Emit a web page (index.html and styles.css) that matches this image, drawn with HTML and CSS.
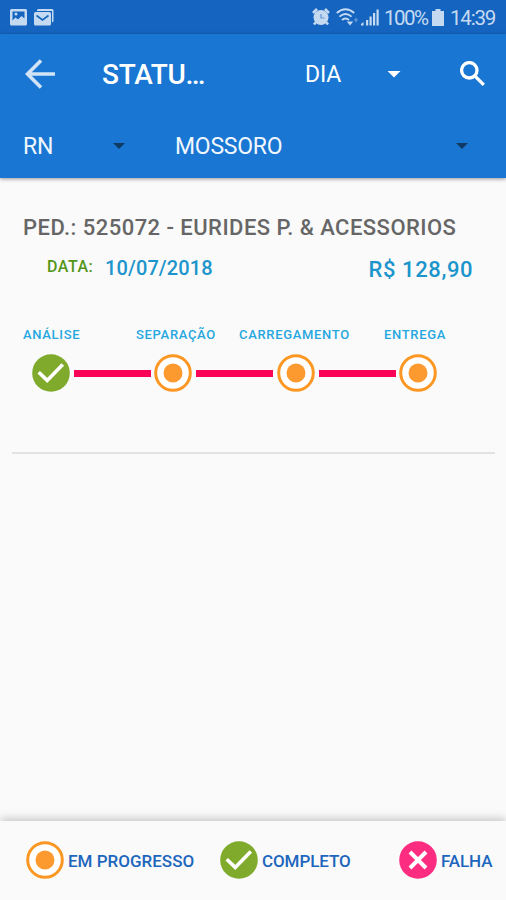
FILE: index.html
```
<!DOCTYPE html>
<html lang="pt-BR">
<head>
<meta charset="utf-8">
<title>Status</title>
<link rel="stylesheet" href="styles.css">
</head>
<body>
<svg class="defs" aria-hidden="true">
  <symbol id="progress" viewBox="0 0 38 38"><circle cx="19" cy="19" r="17.3" fill="#fff" stroke="#fb9722" stroke-width="3"/><circle cx="19" cy="19" r="9.5" fill="#fd9a2f"/></symbol>
  <symbol id="done" viewBox="0 0 38 38"><circle cx="19" cy="19" r="18.8" fill="#7faa2c"/><path d="M6.7 18.3 15.2 26.4 30.8 10.6" fill="none" stroke="#fff" stroke-width="3.6"/></symbol>
  <symbol id="fail" viewBox="0 0 38 38"><circle cx="19" cy="19" r="18.8" fill="#fc2c80"/><path d="M11 11 27 27M27 11 11 27" fill="none" stroke="#fff" stroke-width="4"/></symbol>
</svg>
<div class="statusbar">
  <svg class="st-image" viewBox="0 0 18 17"><path fill-rule="evenodd" d="M1.5 0h14A1.5 1.5 0 0 1 17 1.500v13.500a1.500 1.500 0 0 1-1.500 1.500h-14A1.500 1.500 0 0 1 0 15V1.500A1.500 1.500 0 0 1 1.500 0ZM2.500 2.500v9l3-3 2.500 2 3.500-3.500 3 2.500v-7Z"/><circle cx="6" cy="5" r="1.500"/></svg>
  <svg class="st-mail" viewBox="0 0 21 17"><path d="M4 0h14a1.500 1.500 0 0 1 1.500 1.500V12a1 1 0 0 1-1.500 1V2H3a2 2 0 0 1 1-2Z"/><rect y="3" width="17" height="13.500" rx="1.500"/><path d="m2.500 6.500 6 4.500 6-4.500" fill="none" stroke="#1565c0" stroke-width="1.600"/></svg>
  <div class="st-right">
    <svg class="st-alarm" viewBox="0 0 18 18"><circle cx="9" cy="9.500" r="7.500"/><path d="M1 5 5 1M13 1l4 4M4 14 2 16.500M14 14l2 2.500" stroke="#c5daf1" stroke-width="2.600"/><path d="M9 6V10h3.500" fill="none" stroke="#5f97d6" stroke-width="1.200"/></svg>
    <svg class="st-wifi" viewBox="0 0 22 18"><g fill="none" stroke="#c5daf1" stroke-width="1.900"><path d="M.8 5Q9.500-2.500 18.200 5"/><path d="M3.500 8.600Q9.500 3.400 15.500 8.600"/><path d="M6 12Q9.500 9 13 12"/></g><path d="m14 17.500-3.200-4h6.400Z"/><path class="faint" d="m18 12 2-2.500 2 2.500-2 2.500Z"/></svg>
    <svg class="st-signal" viewBox="0 0 18 17"><path d="M0 16.500v-1.500l2.500-2v3.500ZM5 11h2.200v5.500H5ZM8.500 7.500h2.200v9H8.500ZM12 4h2.200v12.500H12ZM15.500.5h2.200v16h-2.200Z"/></svg>
    <span class="st-pct">100%</span>
    <svg class="st-batt" viewBox="0 0 12 17"><path d="M3.500 0h5v2H12v15H0V2h3.500Z"/></svg>
    <span class="st-time">14:39</span>
  </div>
</div>
<header class="appbar">
  <div class="toolbar">
    <svg class="back" viewBox="0 0 30 30"><path d="M30 15H2.500M16 1.500 2.500 15 16 28.500"/></svg>
    <h1 class="title">STATU…</h1>
    <span class="period">DIA</span>
    <i class="caret caret-light"></i>
    <svg class="search" viewBox="0 0 25 25"><circle cx="9.300" cy="9.300" r="7.700"/><path d="m14.800 14.800 9 9"/></svg>
  </div>
  <div class="filters">
    <span class="state">RN</span><i class="caret"></i>
    <span class="city">MOSSORO</span><i class="caret"></i>
  </div>
</header>
<main class="content">
  <section class="order">
    <h2 class="order-title">PED.: 525072 - EURIDES P. &amp; ACESSORIOS</h2>
    <div class="order-meta"><span class="date-label">DATA:</span><span class="date">10/07/2018</span><span class="price">R$ 128,90</span></div>
    <div class="labels"><span class="l1">ANÁLISE</span><span class="l2">SEPARAÇÃO</span><span class="l3">CARREGAMENTO</span><span class="l4">ENTREGA</span></div>
    <div class="steps">
      <svg class="mark"><use href="#done"/></svg><i class="bar"></i>
      <svg class="mark"><use href="#progress"/></svg><i class="bar"></i>
      <svg class="mark"><use href="#progress"/></svg><i class="bar"></i>
      <svg class="mark"><use href="#progress"/></svg>
    </div>
  </section>
</main>
<footer class="legend">
  <div class="item progress"><svg class="mark"><use href="#progress"/></svg><span>EM PROGRESSO</span></div>
  <div class="item complete"><svg class="mark"><use href="#done"/></svg><span>COMPLETO</span></div>
  <div class="item failed"><svg class="mark"><use href="#fail"/></svg><span>FALHA</span></div>
</footer>
</body>
</html>
```
FILE: styles.css
```
* { box-sizing: border-box; }
body { margin: 0; width: 506px; height: 900px; display: flex; flex-direction: column; overflow: hidden; background: #fafafa; font-family: Roboto, "Liberation Sans", sans-serif; white-space: nowrap; }
h1, h2 { margin: 0; font-weight: 500; }
svg, i { flex: none; display: block; }
.defs { display: none; }

.statusbar { height: 34px; flex: none; display: flex; align-items: center; padding: 0 10px; background: #1565c0; fill: #c5daf1; color: #c5daf1; font-size: 20.5px; }
.st-image { width: 18px; height: 17px; }
.st-mail { width: 21px; height: 17px; margin-left: 6px; }
.st-right { margin-left: auto; display: flex; align-items: center; height: 36px; }
.st-alarm { width: 18px; height: 18px; }
.st-wifi { width: 22px; height: 18px; margin-left: 6px; }
.st-signal { width: 18px; height: 17px; margin-left: 3px; }
.st-pct { width: 46px; margin-left: 5px; margin-top: 2px; letter-spacing: -1.5px; }
.st-batt { width: 12px; height: 17px; margin-left: 2px; }
.st-time { width: 46px; margin-left: 6px; margin-top: 2px; letter-spacing: -1.2px; }
.faint { opacity: .4; }

.appbar { height: 144px; flex: none; background: #1976d2; color: #fff; box-shadow: 0 1px 4px rgba(0, 0, 0, .4); }
.toolbar { height: 80px; display: flex; align-items: center; padding-left: 25px; }
.back { width: 30px; height: 30px; fill: none; stroke: #d1e3f6; stroke-width: 3.6; }
.title { width: 203px; margin-left: 47px; font-size: 28px; letter-spacing: -0.3px; }
.period { width: 82px; margin-top: 1px; font-size: 23px; letter-spacing: -0.2px; }
.caret { width: 12px; height: 6px; background: #0f3a63; clip-path: polygon(0 0, 100% 0, 50% 100%); }
.caret-light { width: 14px; height: 7px; background: #fff; }
.search { width: 25px; height: 25px; margin-left: 59px; margin-top: -2px; fill: none; stroke: #fff; stroke-width: 3.3; }
.filters { height: 64px; display: flex; align-items: center; padding-left: 23px; font-size: 23px; letter-spacing: -0.25px; color: #f1f7fe; }
.state { width: 90px; }
.city { width: 281px; margin-left: 50px; }

.content { flex: 1; padding: 0 11px 0 12px; }
.order { height: 276px; padding: 36px 0 0 11px; border-bottom: 2px solid #e2e2e2; }
.order-title { height: 28px; line-height: 28px; font-size: 22px; letter-spacing: 0.46px; color: #666; }
.order-meta { height: 28px; margin-top: 12px; display: flex; align-items: center; color: #1b95cb; font-weight: 500; }
.date-label { width: 58px; margin-left: 24px; margin-top: -3px; font-size: 16px; letter-spacing: 0.5px; color: #549618; }
.date { width: 263.5px; font-size: 20px; letter-spacing: 0.12px; }
.price { margin-top: 3px; font-size: 22px; letter-spacing: 0.6px; }
.labels { display: flex; height: 20px; line-height: 20px; margin-top: 43px; color: #27a7df; font-size: 13px; letter-spacing: 0.68px; font-weight: 500; }
.l1 { width: 113px; }
.l2 { width: 103px; }
.l3 { width: 145px; }
.steps { display: flex; align-items: center; margin: 9px 0 0 9px; }
.mark { width: 38px; height: 38px; }
.bar { width: 77px; height: 7px; margin: 0 3px 0 4px; background: #fb0458; }
.steps .mark + .bar + .mark { margin-left: .4px; }

.legend { height: 79px; flex: none; display: flex; align-items: center; padding: 0 0 1px 26px; background: #fafafa; box-shadow: 0 -2px 9px rgba(0, 0, 0, .22); color: #1d66bd; font-size: 17px; font-weight: 500; }
.item { display: flex; align-items: center; gap: 4px; }
.item span { margin-top: 2px; }
.progress { width: 194px; }
.complete { width: 179px; }
.complete, .failed { letter-spacing: -0.1px; }
```
